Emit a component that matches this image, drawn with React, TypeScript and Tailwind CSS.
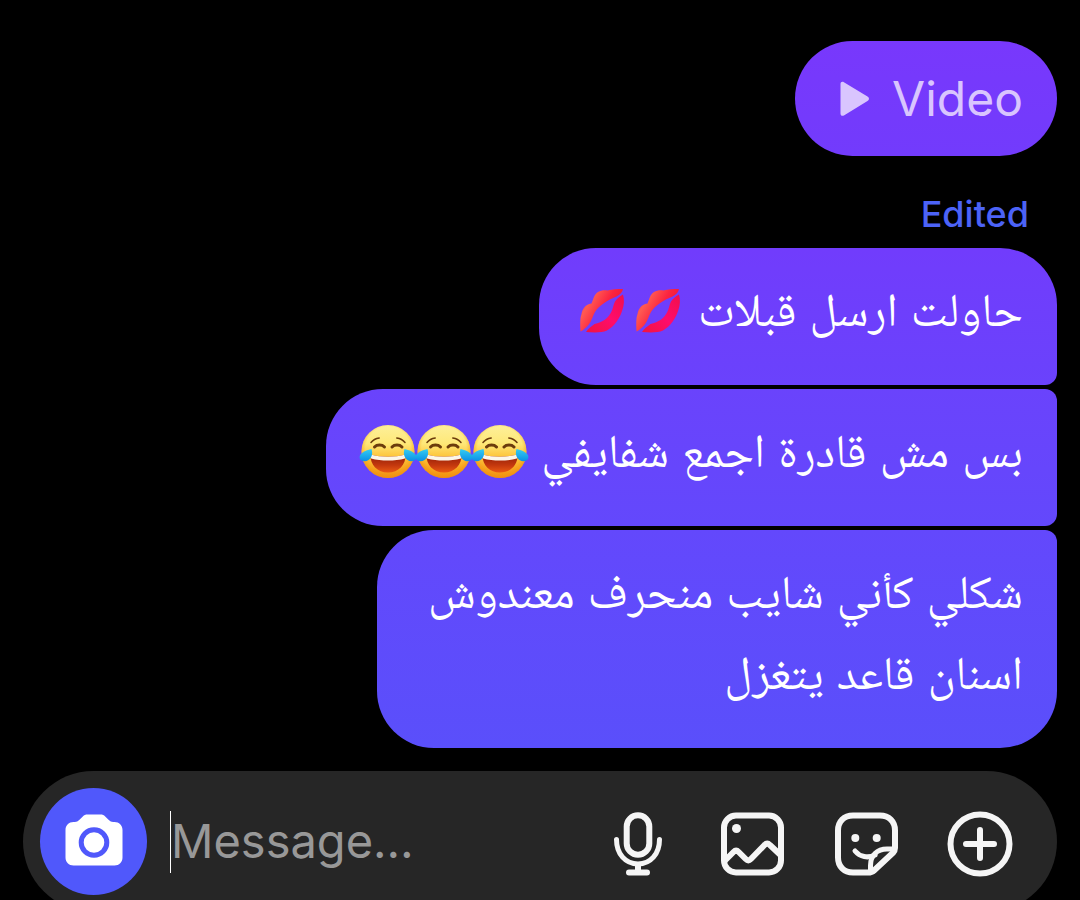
import { useState } from "react";
import type { ReactNode } from "react";
import clsx from "clsx";

interface BubbleProps {
  className?: string;
  children: ReactNode;
}

function Bubble({ className, children }: BubbleProps) {
  return (
    <div
      dir="rtl"
      className={clsx(
        "px-[34px] pt-[26px] pb-[30px] text-[47px] leading-[81px] text-white",
        className
      )}
    >
      {children}
    </div>
  );
}

/**
 * Gradients shared by every emoji in the thread
 */
function EmojiDefs() {
  return (
    <svg width="0" height="0" className="absolute" aria-hidden="true">
      <defs>
        <linearGradient id="face" x1="0" y1="0" x2="0" y2="1">
          <stop offset="0" stopColor="#fdf09a" />
          <stop offset="0.35" stopColor="#fee878" />
          <stop offset="0.6" stopColor="#fdc43a" />
          <stop offset="1" stopColor="#f28e10" />
        </linearGradient>
        <radialGradient id="face-edge" cx="0.5" cy="0.45" r="0.56">
          <stop offset="0.75" stopColor="#f5a010" stopOpacity="0" />
          <stop offset="1" stopColor="#f08c10" stopOpacity="0.8" />
        </radialGradient>
        <linearGradient id="mouth" x1="0" y1="0" x2="0" y2="1">
          <stop offset="0.2" stopColor="#a0260a" />
          <stop offset="0.6" stopColor="#c4380e" />
          <stop offset="1" stopColor="#ea5a14" />
        </linearGradient>
        <linearGradient id="tear" x1="0" y1="0" x2="0" y2="1">
          <stop offset="0" stopColor="#35cdf2" />
          <stop offset="1" stopColor="#0a8fe6" />
        </linearGradient>
        <linearGradient id="lip-top" x1="0" y1="0" x2="1" y2="0.6">
          <stop offset="0" stopColor="#f0284a" />
          <stop offset="0.3" stopColor="#ff5a52" />
          <stop offset="0.6" stopColor="#fb2440" />
          <stop offset="1" stopColor="#e80c3c" />
        </linearGradient>
        <linearGradient id="lip-bottom" x1="0" y1="1" x2="1" y2="0">
          <stop offset="0" stopColor="#f01440" />
          <stop offset="0.5" stopColor="#ff0c6c" />
          <stop offset="1" stopColor="#f00f4c" />
        </linearGradient>
      </defs>
    </svg>
  );
}

function Joy() {
  return (
    <svg
      width="56"
      height="56"
      viewBox="0 0 56 56"
      role="img"
      aria-label="😂"
      className="inline-block overflow-visible align-[-6px]"
    >
      <circle cx="28" cy="28.500" r="26.500" fill="url(#face)" />
      <circle cx="28" cy="28.500" r="26.500" fill="url(#face-edge)" />
      <g fill="none" stroke="#6b3c0c" strokeLinecap="round">
        <path d="M11 19.500c2-2.500 4.800-4 8.200-4.500M45 19.500c-2-2.500-4.800-4-8.200-4.500" strokeWidth="1.500" />
        <path d="M14.500 24c2.500-2.600 7.500-2.600 10 0M32 24c2.500-2.600 7.500-2.600 10 0" strokeWidth="3" />
      </g>
      <path d="M10.500 31.500c11 3 24 3 35 0C46 42 38.500 49.500 28 49.500S10 42 10.500 31.500Z" fill="url(#mouth)" />
      <path d="M10.500 31.500c11 3 24 3 35 0 .2 2 0 3-.6 4-10 2.800-23.800 2.800-33.800 0-.6-1-.8-2-.6-4Z" fill="#fbf6ea" />
      <path d="M11.500 26c1.400 4.500.5 8.500-3 11-3 2-7.500 1.500-8.700-1.500C-1.500 31 4 27.500 11.500 26Z" fill="url(#tear)" />
      <path d="M44.500 26c-1.400 4.500-.5 8.500 3 11 3 2 7.500 1.500 8.700-1.500C57.500 31 52 27.500 44.500 26Z" fill="url(#tear)" />
    </svg>
  );
}

function Kiss() {
  return (
    <svg
      width="56"
      height="56"
      viewBox="0 0 56 56"
      role="img"
      aria-label="💋"
      className="inline-block align-[-6px]"
    >
      <path
        d="M7.500 49.500C7 42 7 36 8.500 32c1-4.500 3-9.500 10-10.500C20.500 17 21 12.500 25 10c3-1.800 6.500-2 9.500-1.500C39 7.300 44.500 7 50 7c-.5 3-3 5.500-6.500 7.500C34.500 18 26 23.500 22 30c-3 5-3 10-9 15.500-1.500 1.500-3.500 3-5.500 4Z"
        fill="url(#lip-top)"
      />
      <path
        d="M50 12.500c1.500 5 1.200 11-.8 16C46.500 37 41 44.500 34 48.500c-5.500 2.500-14 2-21 1.500 2-3 5-5.500 8.500-8 8-1.500 14-6 17-12.500 1.500-3.500 2-7 3.500-10 1.800-3 4.500-5 8-7Z"
        fill="url(#lip-bottom)"
      />
    </svg>
  );
}

function PlayIcon() {
  return (
    <svg width="30" height="36" viewBox="0 0 30 36" fill="currentColor" aria-hidden="true">
      <path d="M.5 3C.5.800 2.300.200 3.900 1.200L27.500 15.600c2 1.200 2 3.200 0 4.400L3.900 34.400C2.300 35.400.5 34.800.5 32.600Z" />
    </svg>
  );
}

function CameraIcon() {
  return (
    <svg width="58" height="52" viewBox="0 0 58 52" aria-hidden="true">
      <path
        fill="#fff"
        d="M22.5.5h13c2 0 3.400.6 4.700 1.900l3.600 3.700c1.200 1.200 2.600 1.900 4.300 1.900h1.400c4.600 0 8 3.400 8 8v27.500c0 4.600-3.400 8-8 8h-41c-4.600 0-8-3.400-8-8V16c0-4.600 3.400-8 8-8h1.400c1.700 0 3.100-.7 4.300-1.900l3.600-3.700C19.100 1.100 20.500.5 22.500.5Z"
      />
      <circle cx="29" cy="28.500" r="12.800" fill="none" stroke="#5058fb" strokeWidth="5" />
    </svg>
  );
}

const strokeProps = {
  width: 66,
  height: 66,
  viewBox: "0 0 66 66",
  fill: "none",
  stroke: "currentColor",
  strokeWidth: 6,
  strokeLinecap: "round",
  strokeLinejoin: "round",
  "aria-hidden": true,
} as const;

function MicIcon() {
  return (
    <svg {...strokeProps}>
      <rect x="21.700" y="4.200" width="22.600" height="39.500" rx="11.300" />
      <path d="M11.500 28.500C11.500 43 20.500 53 33 53s21.500-10 21.500-24.500" strokeWidth="5" />
      <path d="M33 54v7M24 61.500h18" />
    </svg>
  );
}

function GalleryIcon() {
  return (
    <svg {...strokeProps}>
      <rect x="5" y="4.500" width="57" height="57" rx="12" />
      <circle cx="17.500" cy="17.500" r="4.500" fill="currentColor" stroke="none" />
      <path d="M6 49.500l8.500-8.500c1.800-1.800 3.400-1.800 5.200 0l7 7c1.800 1.800 3.400 1.800 5.200 0L45.500 34c1.800-1.800 3.600-1.800 5.400 0L61 43.500" />
    </svg>
  );
}

function StickerIcon() {
  return (
    <svg {...strokeProps}>
      <path d="M35 61.500H20C11 61.500 5 55.500 5 46.500V19.500C5 10.500 11 4.500 20 4.500h27c9 0 15 6 15 15v17.500c0 2-.6 3.400-2 4.800L41 59.500c-1.600 1.500-3.500 2-6 2Z" />
      <path d="M60.500 38H54c-10 0-16.500 6.500-16.500 16.500V61" strokeWidth="5" />
      <path d="M22 40c5 6 13 7.500 20 4" strokeWidth="5" />
      <circle cx="22.300" cy="27" r="4" fill="currentColor" stroke="none" />
      <circle cx="43.700" cy="27" r="4" fill="currentColor" stroke="none" />
    </svg>
  );
}

function PlusIcon() {
  return (
    <svg {...strokeProps}>
      <circle cx="33" cy="33" r="29.500" />
      <path d="M33 19v28M19 33h28" />
    </svg>
  );
}

const actions = [
  { label: "Record voice message", icon: <MicIcon /> },
  { label: "Choose photo", icon: <GalleryIcon /> },
  { label: "Stickers", icon: <StickerIcon /> },
  { label: "More", icon: <PlusIcon /> },
];

function Composer() {
  const [message, setMessage] = useState("");

  return (
    <form
      onSubmit={(e) => e.preventDefault()}
      className="mt-[23px] flex h-[141px] w-full shrink-0 items-center rounded-full bg-[#262626] pr-[44px] pl-[17px]"
    >
      <button
        type="button"
        aria-label="Camera"
        className="flex size-[107px] shrink-0 items-center justify-center rounded-full bg-[#5058fb] pb-1"
      >
        <CameraIcon />
      </button>
      <div className="ml-[23px] h-[62px] w-px bg-white" />
      <input
        aria-label="Message"
        placeholder="Message…"
        value={message}
        onChange={(e) => setMessage(e.target.value)}
        className="min-w-0 flex-1 text-[47px] text-white outline-none placeholder:text-[#989898]"
      />
      <div className="flex shrink-0 items-center gap-12 pt-1 text-[#f5f5f5]">
        {actions.map(({ label, icon }) => (
          <button key={label} type="button" aria-label={label}>
            {icon}
          </button>
        ))}
      </div>
    </form>
  );
}

export default function App() {
  return (
    <main className="flex h-screen flex-col items-end overflow-hidden bg-black px-[23px] pt-[41px] font-['Inter','Noto_Naskh_Arabic_UI','Noto_Naskh_Arabic','Noto_Sans_Arabic','Noto_Sans',sans-serif]">
      <EmojiDefs />
      <button
        type="button"
        className="flex h-[115px] shrink-0 items-center gap-[22px] rounded-full bg-linear-to-b from-[#7838fc] to-[#723bfc] pr-[34px] pl-[45px] text-5xl text-[#d9c5fe]"
      >
        <PlayIcon />
        Video
      </button>
      <p className="mt-8 mr-7 text-4xl leading-[52px] font-medium text-[#4c63f7]">Edited</p>
      <div className="mt-2 flex w-full shrink-0 flex-col items-end gap-1">
        <Bubble className="rounded-[57px] rounded-br-xl bg-linear-to-b from-[#713cfc] to-[#6a42fc]">
          حاولت ارسل قبلات <Kiss />
          <Kiss />
        </Bubble>
        <Bubble className="rounded-l-[57px] rounded-r-xl bg-linear-to-b from-[#6a43fc] to-[#6348fc]">
          بس مش قادرة اجمع شفايفي <Joy />
          <Joy />
          <Joy />
        </Bubble>
        <Bubble className="max-w-[680px] rounded-[57px] rounded-tr-xl bg-linear-to-b from-[#6348fc] to-[#5a4ffb]">
          شكلي كأني شايب منحرف معندوش اسنان قاعد يتغزل
        </Bubble>
      </div>
      <Composer />
    </main>
  );
}
